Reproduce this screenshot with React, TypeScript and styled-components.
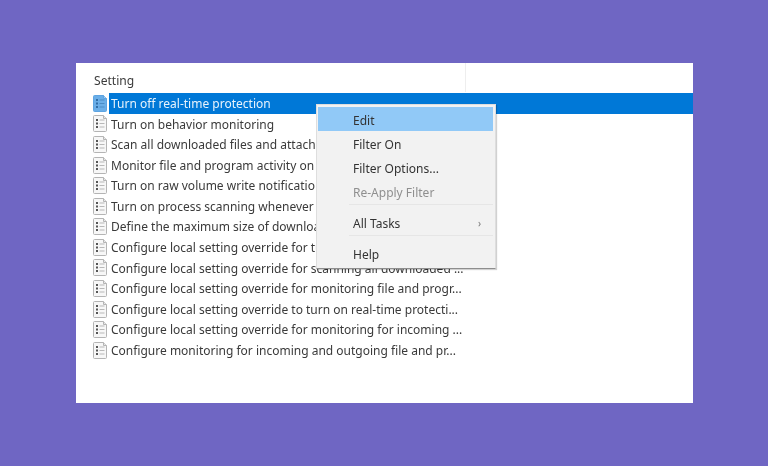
import React from "react";
import styled, { createGlobalStyle } from "styled-components";

const GlobalStyle = createGlobalStyle`
  html, body {
    margin: 0;
    padding: 0;
    background: #6f66c3;
  }
  body {
    font-family: "Noto Sans", "Open Sans", "Liberation Sans", sans-serif;
  }
`;

const Page = styled.div`
  width: 768px;
  height: 466px;
  padding: 63px 75px 63px 76px;
  box-sizing: border-box;
  background: #6f66c3;
  overflow: hidden;
`;

const Panel = styled.div`
  position: relative;
  width: 617px;
  height: 340px;
  background: #fff;
  filter: blur(0.3px);
`;

const Header = styled.div`
  height: 30px;
  display: flex;
`;

const HeaderCell = styled.div`
  width: 390px;
  height: 29px;
  padding: 9px 0 0 18px;
  box-sizing: border-box;
  border-right: 1px solid #eeeeee;
  font-size: 12.1px;
  line-height: 17px;
  color: #3c3c3c;
`;

const List = styled.div`
  display: flex;
  flex-direction: column;
`;

const Row = styled.div`
  display: flex;
  align-items: center;
  height: 20.58px;
  padding-left: 17px;
`;

const RowText = styled.div<{ $selected?: boolean }>`
  flex: ${({ $selected }) => ($selected ? "1" : "0 0 358px")};
  margin-left: 1px;
  padding-left: 2px;
  height: 100%;
  box-sizing: border-box;
  font-size: 12px;
  line-height: 21px;
  white-space: nowrap;
  overflow: hidden;
  color: ${({ $selected }) => ($selected ? "#e8f3fc" : "#3a3a3a")};
  background: ${({ $selected }) => ($selected ? "#0078d7" : "transparent")};
`;

const Menu = styled.div`
  position: absolute;
  left: 240px;
  top: 41px;
  width: 180px;
  height: 165px;
  box-sizing: border-box;
  padding: 2px 2px 2px 1px;
  background: #f2f2f2;
  border: 1px solid #dedede;
  border-bottom: 1px solid #8e8e8e;
  box-shadow: 1px 1px 1px rgba(0, 0, 0, 0.18);
  display: flex;
  flex-direction: column;
`;

const MenuItem = styled.div<{ $active?: boolean; $disabled?: boolean }>`
  height: 24px;
  flex-shrink: 0;
  display: flex;
  align-items: center;
  justify-content: space-between;
  padding: 2px 12px 0 35px;
  box-sizing: border-box;
  font-size: 12px;
  color: ${({ $disabled }) => ($disabled ? "#8f8f8f" : "#333")};
  background: ${({ $active }) => ($active ? "#91c9f7" : "transparent")};
`;

const Separator = styled.div`
  height: 1px;
  margin: 1px 0 5px 31px;
  background: #e6e6e6;
  flex-shrink: 0;
`;

const Chevron = styled.span`
  font-size: 10px;
  line-height: 10px;
  color: #777;
`;

const PolicyIcon = ({ selected }: { selected?: boolean }) => (
  <svg width="15" height="17" viewBox="0 0 15 17">
    <path
      d="M1.5 .5H10.5L13.5 3.5V15.5A1 1 0 0 1 12.5 16.5H1.5A1 1 0 0 1 .5 15.5V1.5A1 1 0 0 1 1.5 .5Z"
      fill={selected ? "#6aaee8" : "#f7f7f7"}
      stroke={selected ? "#5da4e2" : "#b4b4b4"}
    />
    <path d="M10.5 .5V3.5H13.5" fill={selected ? "#a6d0f2" : "#e8e8e8"} stroke={selected ? "#5da4e2" : "#b4b4b4"} />
    {[4, 7.5, 11].map((y) => (
      <g key={y}>
        <rect x="3" y={y} width="2" height="2" fill={selected ? "#2f6ea8" : "#555"} />
        <rect x="6.5" y={y + 0.5} width="5" height="1" fill={selected ? "#4a8cc6" : "#b8b8b8"} />
      </g>
    ))}
  </svg>
);

const settings = [
  "Turn off real-time protection",
  "Turn on behavior monitoring",
  "Scan all downloaded files and attachments",
  "Monitor file and program activity on your computer",
  "Turn on raw volume write notifications",
  "Turn on process scanning whenever real-time protection",
  "Define the maximum size of downloaded files",
  "Configure local setting override for turn on behavior",
  "Configure local setting override for scanning all downloaded ...",
  "Configure local setting override for monitoring file and progr...",
  "Configure local setting override to turn on real-time protecti...",
  "Configure local setting override for monitoring for incoming ...",
  "Configure monitoring for incoming and outgoing file and pr...",
];

export default function App() {
  return (
    <>
      <GlobalStyle />
      <Page>
        <Panel>
          <Header>
            <HeaderCell>Setting</HeaderCell>
          </Header>
          <List>
            {settings.map((text, i) => (
              <Row key={text}>
                <PolicyIcon selected={i === 0} />
                <RowText $selected={i === 0}>{text}</RowText>
              </Row>
            ))}
          </List>
          <Menu>
            <MenuItem $active>Edit</MenuItem>
            <MenuItem>Filter On</MenuItem>
            <MenuItem>Filter Options...</MenuItem>
            <MenuItem $disabled>Re-Apply Filter</MenuItem>
            <Separator />
            <MenuItem>
              All Tasks
              <Chevron>›</Chevron>
            </MenuItem>
            <Separator />
            <MenuItem>Help</MenuItem>
          </Menu>
        </Panel>
      </Page>
    </>
  );
}
